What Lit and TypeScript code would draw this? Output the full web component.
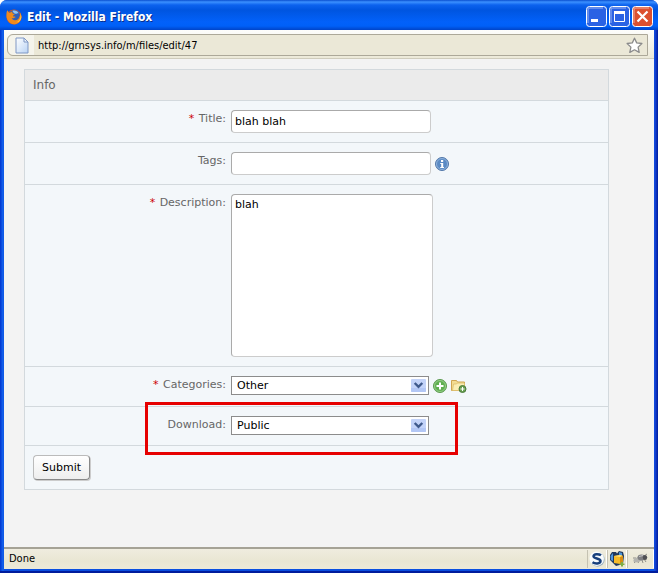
import { LitElement, html, css, svg } from "lit";
import { customElement, property } from "lit/decorators.js";

const firefoxIcon = html`<svg width="16" height="16" viewBox="0 0 16 16" aria-hidden="true">
  <circle cx="8" cy="8" r="7.500" fill="#d9541a" />
  <circle cx="8.300" cy="6.500" r="5.600" fill="#2f5fb8" />
  <path d="M6.500 1.800c2.500-1 5.200.2 6 2.400-1.300-.2-1.800.8-3 .6-1.400-.3-2.600-1.400-3-3z" fill="#8fc4f2" />
  <path d="M1.200 1.200c-1.100 3-1.100 6.800.1 9.200C2.800 13.800 6 15.600 9 15.200c3.700-.5 6.300-3.600 6.400-7.200 0-1.800-.5-3.600-1.500-4.800.4 1.600.3 2.900-.2 4-.7 2.700-2.600 4.200-4.900 4-1.500-.1-2.800-1-3.100-2.200.9.500 1.900.4 2.700-.2.500-.3 1.200-.3 1.100-.8-.6-.8-1.600-.3-2.500-.7-.3-.8.9-1.300 1.600-1.800.1-.7-.9-.9-1.600-.8C6 3.800 6.300 3.200 6.800 2.800 5.600 2.700 4.500 3.300 3.800 4c-.9-.2-1.300-1.300-2.600-2.800z" fill="#f08a1c" />
  <path d="M14.400 5c.8 3.500-.8 7.200-4.400 8.500 3-.1 5.200-2.700 5.300-5.500 0-1.100-.3-2.200-.9-3z" fill="#ffd34a" />
</svg>`;

const pageIcon = html`<svg width="14" height="17" viewBox="0 0 14 17" aria-hidden="true">
  <defs><linearGradient id="pg" x1="0" y1="0" x2="1" y2="1"><stop offset="0" stop-color="#fff" /><stop offset="1" stop-color="#b9d3f4" /></linearGradient></defs>
  <path d="M1 1h8l4 4v11H1z" fill="url(#pg)" stroke="#7f97c4" />
  <path d="M9 1v4h4z" fill="#eef5fd" stroke="#7f97c4" />
</svg>`;

const starIcon = html`<svg width="17" height="17" viewBox="0 0 17 17" aria-hidden="true">
  <path d="M8.500 1.200l2.200 4.700 5.200.6-3.800 3.600 1.100 5.300-4.700-2.600-4.700 2.600 1.100-5.300L1.100 6.500l5.200-.6z" fill="#fff" stroke="#8b8b8b" stroke-width="1.300" stroke-linejoin="round" />
</svg>`;

const infoIcon = html`<svg width="14" height="14" viewBox="0 0 14 14" aria-hidden="true">
  <circle cx="7" cy="7" r="6.500" fill="#5a8ac4" stroke="#5378a8" />
  <circle cx="7" cy="7" r="5.500" fill="none" stroke="#9dbde2" stroke-width=".8" />
  <path d="M6 3h2.200v2H6zM5.300 6h2.900v4H9v1H5.200v-1h1V7h-.9z" fill="#fff" />
</svg>`;

const addIcon = html`<svg width="14" height="14" viewBox="0 0 14 14" aria-hidden="true">
  <circle cx="7" cy="7" r="6.500" fill="#5fae50" stroke="#5d9a50" />
  <circle cx="7" cy="7" r="5.500" fill="none" stroke="#a3d598" stroke-width=".8" />
  <path d="M6 3.500h2V6h2.500v2H8v2.500H6V8H3.500V6H6z" fill="#fff" />
</svg>`;

const folderAddIcon = html`<svg width="16" height="15" viewBox="0 0 16 15" aria-hidden="true">
  <path d="M.5 12.500V2.500h5l1 1.500h7v8.500z" fill="#f3dc92" stroke="#cfa550" />
  <path d="M1.500 12.500l1-6.500h3l1-1h7v7.500z" fill="#fbeeb4" stroke="#dcbc6a" stroke-width=".8" />
  <circle cx="11.500" cy="11" r="3.500" fill="#69a052" stroke="#4b7b3b" />
  <path d="M11 9h1v1.500h1.500v1H12V13h-1v-1.500H9.500v-1H11z" fill="#fff" />
</svg>`;

const arrowIcon = html`<svg class="arrow" width="15" height="13" viewBox="0 0 15 13" aria-hidden="true">
  <rect x="0" y="0" width="15" height="13" rx="1" fill="#c3d3f9" />
  <path d="M0 9h15v3a1 1 0 0 1-1 1H1a1 1 0 0 1-1-1z" fill="#b3c7f5" />
  <path d="M3.700 4l3.800 3.800L11.300 4" fill="none" stroke="#3f5a8c" stroke-width="2.400" />
</svg>`;

const badgeIcon = html`<svg width="16" height="16" viewBox="0 0 16 16" aria-hidden="true">
  <circle cx="8.500" cy="8.500" r="7.200" fill="#9db2c0" />
  <circle cx="7.700" cy="7.700" r="7.200" fill="#f7fafc" />
  <path d="M12 4.300C10 2.800 4.700 2.400 4.500 5.300c0 2.800 7 1.700 7 4.700 0 3.100-5.600 2.900-8 1.300" fill="none" stroke="#173f7c" stroke-width="2.500" />
</svg>`;

const puzzleIcon = html`<svg width="16" height="16" viewBox="0 0 16 16" aria-hidden="true">
  <path d="M3 1h4l1 1.500L10 0l4 1 1 4-1 8-7 2-4-4-2-2V4z" fill="#20395c" />
  <path d="M1.500 5l2.500-3v8l-2-1z" fill="#4d96df" />
  <path d="M10 1l3 1v3h-3z" fill="#4a94da" />
  <path d="M5 5l6-1 3 1v6l-3 2-6-1z" fill="#f6bb28" />
  <path d="M5 5l6-1 3 1-3 1z" fill="#ffe27a" />
  <path d="M11 6l3-1v6l-3 2z" fill="#d98c10" />
  <path d="M12 11h2v1.500h1.500V14H14v1.500h-2V14h-1.500v-1.500H12z" fill="#7fae45" />
</svg>`;

const bugIcon = html`<svg width="17" height="16" viewBox="0 0 17 16" aria-hidden="true">
  <g stroke="#85857f" fill="none" stroke-width=".9"><path d="M5 9l-3 3M7 10l-1 2M10 9l1 3M12 8l2 3M4 7L1 7M12 5l3-2" /></g>
  <ellipse cx="6" cy="8.500" rx="5" ry="2.300" transform="rotate(-20 6 8)" fill="#b5b5b0" />
  <ellipse cx="9.500" cy="6.500" rx="4" ry="3" fill="#808083" />
  <ellipse cx="13" cy="6.500" rx="2.200" ry="2.500" fill="#505054" />
  <path d="M7 5.500l4-1" stroke="#c8c8ca" />
</svg>`;

@customElement("form-row")
class FormRow extends LitElement {
  @property() label = "";
  @property() field = "";
  @property({ type: Boolean }) required = false;
  @property() kind = "text";
  @property() value = "";
  @property({ type: Array }) options: string[] = [];

  static styles = css`
    :host {
      display: grid;
      grid-template-columns: 201px 1fr;
      column-gap: 5px;
      border-bottom: 1px solid #d3d9dd;
      padding: 9px 0;
      position: relative;
      font: 11px/14px "DejaVu Sans", Verdana, sans-serif;
    }
    label { text-align: right; color: #666; padding-top: 2px; }
    .star { color: #c00; margin-right: 1px; }
    .cell { display: flex; align-items: center; gap: 4px; }
    input, textarea, select {
      box-sizing: border-box;
      margin: 0;
      font: inherit;
      color: #000;
      background: #fff;
      outline: 0;
    }
    input, textarea {
      width: 200px;
      border: 1px solid #ccc;
      border-top-color: #aaa;
      border-left-color: #aaa;
      border-radius: 4px;
    }
    input { height: 23px; padding: 0 3px; }
    textarea { width: 202px; height: 163px; padding: 3px; resize: none; display: block; }
    .pick { position: relative; display: flex; }
    select {
      appearance: none;
      width: 198px;
      height: 19px;
      border: 1px solid #8c8c8c;
      border-radius: 0;
      padding: 0 20px 0 5px;
    }
    .arrow { position: absolute; right: 3px; top: 3px; pointer-events: none; }
    ::slotted(*) { flex: none; }
  `;

  control() {
    if (this.kind === "select") {
      return html`<span class="pick"
        ><select id="control" name=${this.field}>
          ${this.options.map((o) => html`<option ?selected=${o === this.value}>${o}</option>`)}
        </select>${arrowIcon}</span>`;
    }
    if (this.kind === "area") {
      return html`<textarea id="control" name=${this.field} .value=${this.value}></textarea>`;
    }
    return html`<input id="control" type="text" name=${this.field} .value=${this.value} />`;
  }

  render() {
    return html`
      <label for="control">${this.required ? html`<span class="star">*</span> ` : ""}${this.label}:</label>
      <div class="cell">${this.control()}<slot></slot></div>
      <slot name="highlight"></slot>
    `;
  }
}

@customElement("app-root")
class AppRoot extends LitElement {
  static styles = css`
    :host {
      display: flex;
      flex-direction: column;
      box-sizing: border-box;
      min-height: 100vh;
      padding: 0 4px 4px;
      background: linear-gradient(90deg, #0034cf 0, #1464ee 3px, #0a4fe0 4px, #0a4fe0 calc(100% - 4px), #1444d8 calc(100% - 3px), #001c9c 100%);
      box-shadow: inset 0 -2px #001c9c;
      border-radius: 7px 7px 0 0;
      color: #000;
      font: 11px/14px "DejaVu Sans Condensed", "DejaVu Sans", Tahoma, sans-serif;
    }
    button { font: inherit; margin: 0; padding: 0; border: 0; background: none; display: block; }
    svg { display: block; flex: none; }
    .title {
      display: flex;
      align-items: center;
      gap: 5px;
      height: 30px;
      margin: 0 -4px;
      padding: 3px 5px 0 6px;
      box-sizing: border-box;
      border-radius: 7px 7px 0 0;
      background: linear-gradient(#0a4fd0 0, #3b90ff 2px, #0c62ee 5px, #0055e0 10px, #0261fa 22px, #0060f8 26px, #0044c8 30px);
    }
    h1 {
      flex: 1;
      margin: 0;
      color: #fff;
      text-shadow: 1px 1px #0a2f8c;
      font: bold 12px/16px "DejaVu Sans Condensed", "DejaVu Sans", sans-serif;
    }
    .controls { display: flex; gap: 2px; }
    .toolbar {
      display: flex;
      height: 29px;
      box-sizing: border-box;
      padding: 4px 6px 2px 3px;
      background: linear-gradient(#fdfdfb, #ece9d8);
      border-bottom: 1px solid #cfccbc;
    }
    .address {
      flex: 1;
      display: flex;
      align-items: center;
      border: 1px solid #aca899;
      border-radius: 6px 0 0 6px;
      background: #ebe8d7;
      padding-right: 4px;
    }
    .site {
      align-self: stretch;
      display: flex;
      align-items: center;
      padding: 0 5px 0 7px;
      border-radius: 6px 0 0 6px;
      background: #f5f4ec;
    }
    .address input {
      flex: 1;
      min-width: 0;
      border: 0;
      padding: 2px 0 0 4px;
      background: none;
      font: inherit;
      color: #000;
      outline: 0;
    }
    main { flex: 1; background: #f3f3f3; padding: 10px 45px 20px 20px; }
    .panel { border: 1px solid #d3d9dd; background: #f3f7fa; }
    h2 {
      margin: 0;
      padding: 8px 8px 7px;
      border-bottom: 1px solid #d3d9dd;
      background: #ebebeb;
      color: #666;
      font: 12px/15px "DejaVu Sans", Verdana, sans-serif;
    }
    .pickers { padding-bottom: 11px; }
    .marked { padding-bottom: 10px; }
    .highlight {
      position: absolute;
      box-sizing: border-box;
      left: 120px;
      top: -5px;
      width: 313px;
      height: 53px;
      border: 3px solid #e60000;
      pointer-events: none;
    }
    .actions { padding: 9px 8px; }
    .submit {
      height: 25px;
      padding: 0 8px;
      border: 1px solid #bbb;
      border-right-color: #888;
      border-bottom-color: #888;
      border-radius: 4px;
      box-shadow: 1px 1px #ccc;
      background: linear-gradient(#fff, #eee);
      font: 11px/14px "DejaVu Sans", Verdana, sans-serif;
      color: #000;
    }
    .status {
      display: flex;
      align-items: center;
      height: 22px;
      box-sizing: border-box;
      border-top: 2px solid #a5a295;
      background: linear-gradient(#efecdf, #e9e6d3 60%, #ece9d8);
      padding-left: 5px;
    }
    .status span { flex: 1; }
    .tray {
      padding: 0 1px;
      border-left: 1px solid #c5c2b2;
      border-right: 1px solid #fff;
      height: 18px;
      display: flex;
      align-items: center;
      box-sizing: border-box;
    }
    .tray:last-child { padding: 0 4px; }
  `;

  windowButton(name: string, fill: string, glyph: unknown) {
    return html`<button aria-label=${name}>
      <svg width="21" height="21" viewBox="0 0 21 21">
        <rect x=".5" y=".5" width="20" height="20" rx="3" fill=${fill} stroke="#fff" />
        <path d="M2 17V4a2 2 0 0 1 2-2h13" fill="none" stroke="#fff" stroke-opacity=".35" stroke-width="1.500" />
        ${glyph}
      </svg>
    </button>`;
  }

  render() {
    return html`
      <header class="title">
        ${firefoxIcon}
        <h1>Edit - Mozilla Firefox</h1>
        <div class="controls">
          ${this.windowButton("Minimize", "#2a62e4", svg`<path d="M5 13h7v3H5z" fill="#fff"/>`)}
          ${this.windowButton("Maximize", "#2a62e4", svg`<path d="M5.500 5.500h10v10h-10z" fill="none" stroke="#fff"/><path d="M5 5h11v3H5z" fill="#fff"/>`)}
          ${this.windowButton("Close", "#dc5030", svg`<path d="M5.500 5.500l10 10M15.500 5.500l-10 10" stroke="#fff" stroke-width="2.200"/>`)}
        </div>
      </header>
      <div class="toolbar">
        <div class="address">
          <span class="site">${pageIcon}</span>
          <input type="text" aria-label="Address" .value=${"http://grnsys.info/m/files/edit/47"} />
          <button aria-label="Bookmark">${starIcon}</button>
        </div>
      </div>
      <main>
        <form class="panel" @submit=${(e: Event) => e.preventDefault()}>
          <h2>Info</h2>
          <form-row label="Title" field="title" required value="blah blah"></form-row>
          <form-row label="Tags" field="tags"><button type="button" aria-label="Help">${infoIcon}</button></form-row>
          <form-row label="Description" field="description" required kind="area" value="blah"></form-row>
          <form-row class="pickers" label="Categories" field="categories" required kind="select" value="Other" .options=${["Other"]}>
            <button type="button" aria-label="Add">${addIcon}</button>
            <button type="button" aria-label="Add category">${folderAddIcon}</button>
          </form-row>
          <form-row class="marked" label="Download" field="download" kind="select" value="Public" .options=${["Public"]}>
            <div class="highlight" slot="highlight"></div>
          </form-row>
          <div class="actions"><button class="submit">Submit</button></div>
        </form>
      </main>
      <footer class="status">
        <span>Done</span>
        <div class="tray">${badgeIcon}</div>
        <div class="tray">${puzzleIcon}</div>
        <div class="tray">${bugIcon}</div>
      </footer>
    `;
  }
}
